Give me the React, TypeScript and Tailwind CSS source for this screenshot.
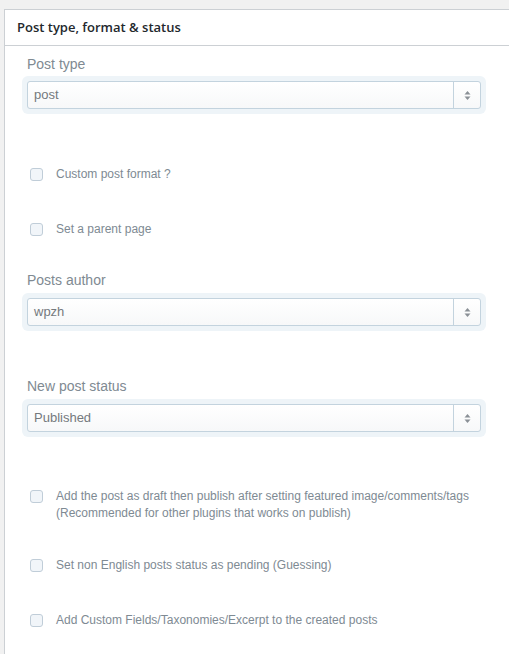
import React from 'react';

const Select: React.FC<{ value: string }> = ({ value }) => (
  <div className="rounded-[6px] bg-[#eef4f8] p-[5px]">
    <div className="flex h-[28px] items-stretch rounded-[3px] border border-[#c3d3de] bg-gradient-to-b from-white to-[#f7f8f9]">
      <div className="flex flex-1 items-center pl-[6px] text-[13px] text-[#74797d]">{value}</div>
      <div className="flex w-[27px] items-center justify-center border-l border-[#c3d3de]">
        <svg width="7" height="11" viewBox="0 0 7 11">
          <path d="M3.5 1 L6.5 4.5 H0.5 Z" fill="#8a9096" />
          <path d="M3.5 10 L6.5 6.5 H0.5 Z" fill="#8a9096" />
        </svg>
      </div>
    </div>
  </div>
);

const Check: React.FC<{ children: React.ReactNode; className?: string }> = ({ children, className }) => (
  <div className={`flex items-start pl-[8px] ${className ?? ''}`}>
    <span className="mt-[2px] h-[13px] w-[13px] shrink-0 rounded-[3px] border border-[#c0cdd8] bg-[#f1f5f9]" />
    <div className="ml-[13px] text-[12px] leading-[17px] text-[#7e8a93]">{children}</div>
  </div>
);

const Label: React.FC<{ children: React.ReactNode; className?: string }> = ({ children, className }) => (
  <div className={`pl-[5px] text-[14px] leading-[20px] text-[#808a92] ${className ?? ''}`}>{children}</div>
);

const App: React.FC = () => {
  return (
    <div className="min-h-screen bg-[#f1f1f1] pt-[9px] pl-[4px]" style={{ fontFamily: '"Liberation Sans", Arial, sans-serif' }}>
      <div className="min-h-[645px] border-l border-t border-[#ccd0d4] bg-white">
        {/* Header */}
        <div className="flex h-[36px] items-center border-b border-[#ccd0d4] pl-[12px]">
          <h2 className="text-[13px] font-semibold text-[#23282d]" style={{ fontFamily: '"Open Sans", sans-serif' }}>
            Post type, format &amp; status
          </h2>
        </div>

        {/* Body */}
        <div className="px-[17px] pr-[23px]">
          <Label className="mt-[8px] mb-[2px]">Post type</Label>
          <Select value="post" />

          <Check className="mt-[52px]">Custom post format ?</Check>
          <Check className="mt-[38px]">Set a parent page</Check>

          <Label className="mt-[32px] mb-[3px]">Posts author</Label>
          <Select value="wpzh" />

          <Label className="mt-[45px] mb-[3px]">New post status</Label>
          <Select value="Published" />

          <Check className="mt-[51px]">
            Add the post as draft then publish after setting featured image/comments/tags
            <br />
            (Recommended for other plugins that works on publish)
          </Check>
          <Check className="mt-[35px]">Set non English posts status as pending (Guessing)</Check>
          <Check className="mt-[38px]">Add Custom Fields/Taxonomies/Excerpt to the created posts</Check>
        </div>
      </div>
    </div>
  );
};

export default App;
